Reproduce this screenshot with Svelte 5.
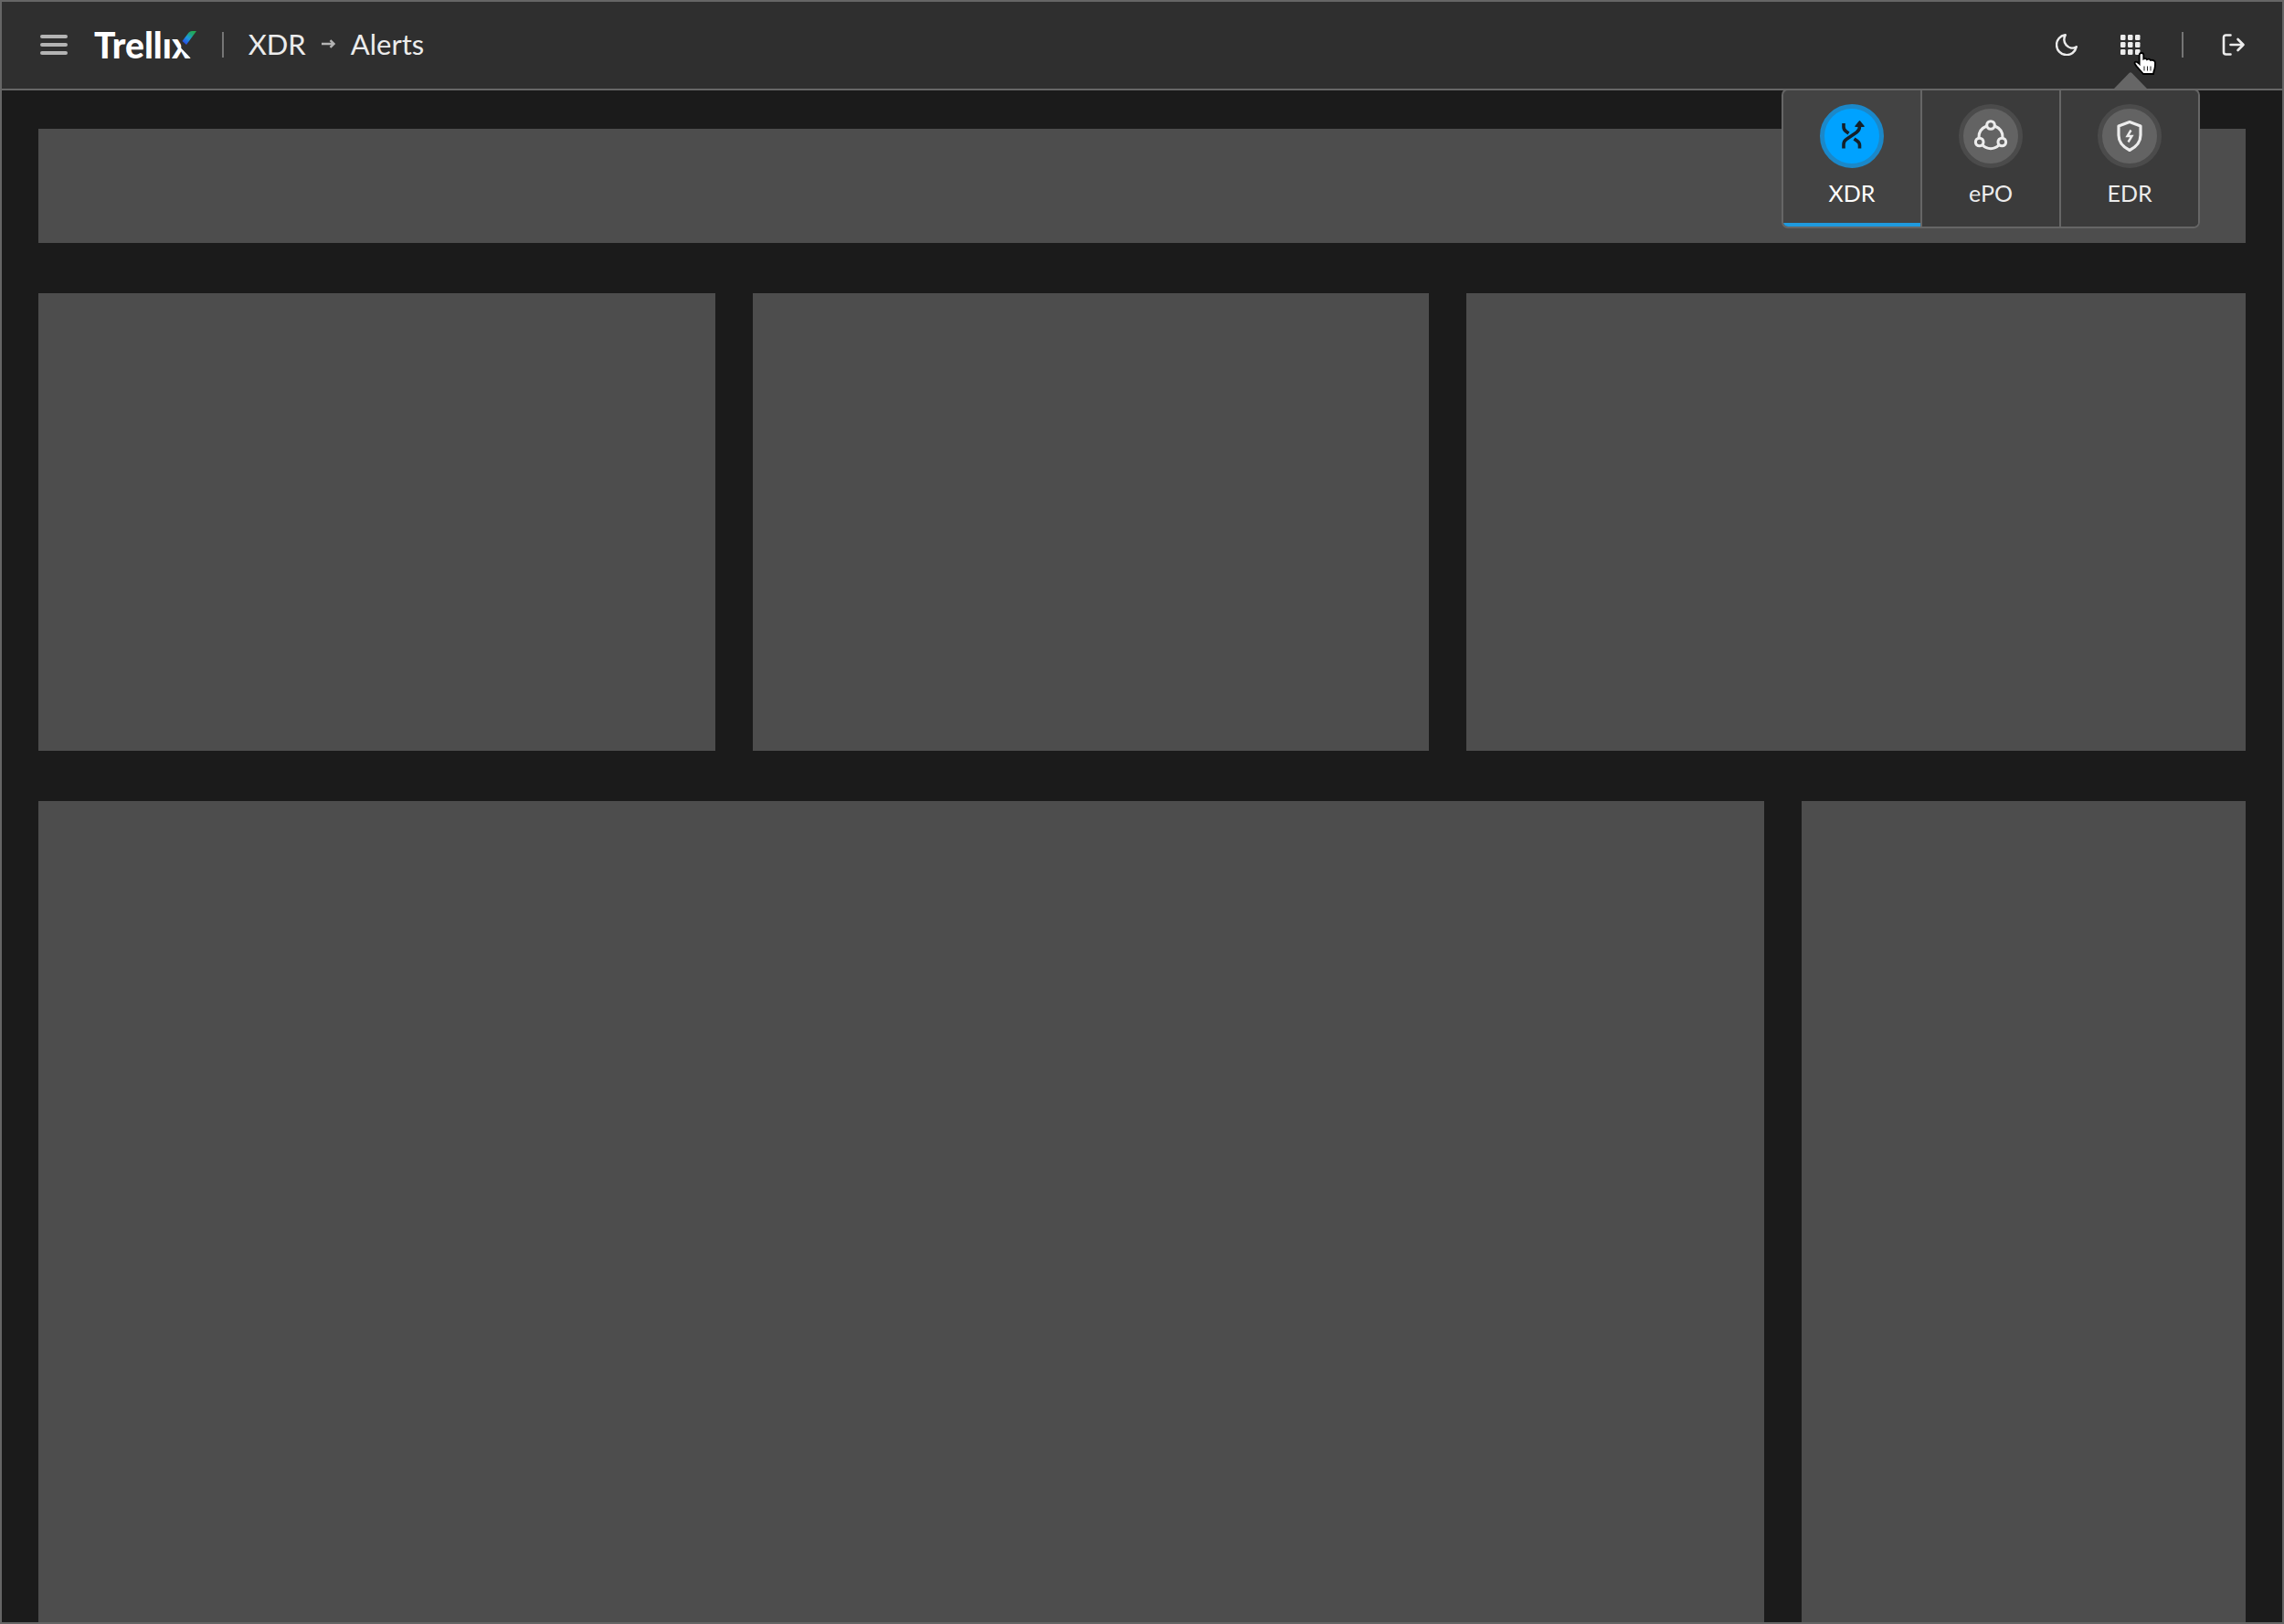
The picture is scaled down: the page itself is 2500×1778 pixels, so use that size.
<script>
  let active = $state('XDR');
  const apps = ['XDR', 'ePO', 'EDR'];
</script>

<div class="frame">
  <header>
    <button class="icon menu-toggle" aria-label="Menu">
      <svg width="30" height="22" viewBox="0 0 30 22">
        <g fill="#b4b4b4">
          <rect width="30" height="4" rx="2" />
          <rect y="9" width="30" height="4" rx="2" />
          <rect y="18" width="30" height="4" rx="2" />
        </g>
      </svg>
    </button>
    <a class="logo" href="#home" aria-label="Trellix">
      <span>Trellı</span><span class="x"><span class="letter">x</span>
        <svg class="arm" width="16" height="15" viewBox="0 0 16 15">
          <defs>
            <linearGradient id="arm" x1="2" y1="14" x2="12" y2="0" gradientUnits="userSpaceOnUse">
              <stop offset="0" stop-color="#2b3fe6" />
              <stop offset="0.45" stop-color="#1d98e0" />
              <stop offset="0.8" stop-color="#1fa574" />
              <stop offset="1" stop-color="#22ab55" />
            </linearGradient>
          </defs>
          <path d="M0.500 11 7.500 1.800Q9 0 11 0H16L5 15Z" fill="url(#arm)" />
        </svg></span>
    </a>
    <span class="rule"></span>
    <nav class="crumbs" aria-label="Breadcrumb">
      <a href="#xdr">XDR</a>
      <svg width="15" height="10" viewBox="0 0 15 10">
        <path d="M0 5H13M9.500 1.200 13.500 5 9.500 8.800" fill="none" stroke="#b4b4b4" stroke-width="2.400" />
      </svg>
      <a href="#alerts">Alerts</a>
    </nav>

    <div class="tools">
      <button class="icon" aria-label="Dark mode">
        <svg width="24" height="24" viewBox="0 0 24 24">
          <path
            d="M10.500 1.200A11 11 0 1 0 22.800 14.300C19 16.500 14.500 15.800 11.800 12.600 9 9.500 8.800 5 10.800 1.200Z"
            fill="none" stroke="#ececec" stroke-width="2.400" stroke-linejoin="round"
          />
        </svg>
      </button>
      <div class="switcher">
        <button class="icon" aria-label="Applications" aria-expanded="true">
          <svg width="22" height="22" viewBox="0 0 22 22" fill="#ececec">
            {#each [0, 8, 16] as y}
              {#each [0, 8, 16] as x}
                <rect {x} {y} width="5.500" height="6" rx="1.300" />
              {/each}
            {/each}
          </svg>
        </button>
        <svg class="caret" width="36" height="18" viewBox="0 0 36 18">
          <path d="M0 18 16.500 1Q18 -0.500 19.500 1L36 18Z" fill="#666" />
        </svg>
        <div class="apps">
          {#each apps as app}
            <button class:active={active === app} onclick={() => (active = app)}>
              <span class="disc">
                {#if app === 'XDR'}
                  <svg width="34" height="34" viewBox="0 0 34 34" fill="none" stroke="#14202a" stroke-width="3.600">
                    <path d="M8 3V7Q8 10 10.500 11.800L13.500 14M8 30.500V26Q8 22.500 11 20.500L22 13Q25.500 10.500 25.500 6V4M19.500 20 23 22.500Q25.500 24.300 25.500 27V30.500" />
                    <path d="M25.500 1 29.800 6.200H21.200Z" fill="#14202a" stroke-width="1.800" stroke-linejoin="round" />
                  </svg>
                {:else if app === 'ePO'}
                  <svg width="40" height="36" viewBox="0 0 40 36" fill="none" stroke="#ececec" stroke-width="3.100">
                    <circle cx="20" cy="6" r="4.300" />
                    <circle cx="7.700" cy="24.500" r="4.300" />
                    <circle cx="32.300" cy="24.500" r="4.300" />
                    <path d="M15.500 7C9.500 9.500 6.500 14 7 20M24.500 7C30.500 9.500 33.500 14 33 20M11 27.800C16 33 24 33 29 27.800" />
                  </svg>
                {:else}
                  <svg width="30" height="36" viewBox="0 0 30 36" fill="none" stroke="#ececec" stroke-width="3.200">
                    <path d="M15 2.500 27 7V17Q27 27.500 15 33.500 3 27.500 3 17V7Z" stroke-linejoin="round" />
                    <path d="M16.500 11.500 12.500 18H17.500L13.500 24.500" stroke-width="2.400" />
                  </svg>
                {/if}
              </span>
              <span>{app}</span>
            </button>
          {/each}
        </div>
        <svg class="cursor" width="27" height="28" viewBox="0 0 27 28">
          <path
            d="M10 2C11.500 2 12.300 3 12.300 4.300V8.500C13.500 7.800 15.500 8 16 9.200 17.500 8.400 19.300 8.800 20 10 22 9.300 25 10.200 25 12.800 25 16.500 24.800 19.500 23.500 22L23 25H12C10 22.500 7 19.500 5 17 3.500 15 1.800 13.500 2.700 12.300 3.800 11 5.800 12 7.700 14V4.300C7.700 3 8.500 2 10 2Z"
            fill="#fff" stroke="#000" stroke-width="1.800"
          />
          <path d="M13 16.500V21.500M16.500 16.500V21.500M20 16.500V21.500" stroke="#222" stroke-width="1" />
        </svg>
      </div>
      <span class="rule"></span>
      <button class="icon logout" aria-label="Log out">
        <svg width="26" height="24" viewBox="0 0 26 24" fill="none" stroke="#ececec" stroke-width="2.600" stroke-linecap="round" stroke-linejoin="round">
          <path d="M9.500 1.500H4.500Q2 1.500 2 4V20Q2 22.500 4.500 22.500H9.500M9.500 12H23.500M17.500 6 23.500 12 17.500 18" />
        </svg>
      </button>
    </div>
  </header>

  <main>
    <section class="panel banner"></section>
    <div class="row three">
      <section class="panel"></section>
      <section class="panel"></section>
      <section class="panel"></section>
    </div>
    <div class="row two">
      <section class="panel"></section>
      <section class="panel"></section>
    </div>
  </main>
</div>

<style>
  :global(body) {
    margin: 0;
    background: #1b1b1b;
  }
  .frame {
    box-sizing: border-box;
    min-height: 100vh;
    display: flex;
    flex-direction: column;
    border: 2px solid #666;
    background: #1b1b1b;
    color: #ececec;
    font-family: Lato, sans-serif;
  }
  header {
    display: flex;
    align-items: center;
    height: 94px;
    padding: 0 40px 1px 42px;
    border-bottom: 2px solid #666;
    background: #2f2f2f;
  }
  svg {
    display: block;
  }
  a {
    color: inherit;
    text-decoration: none;
  }
  button {
    padding: 0;
    border: 0;
    background: none;
    color: inherit;
    font: inherit;
    cursor: pointer;
  }
  .icon {
    display: block;
  }
  .logo {
    display: flex;
    margin-left: 29px;
    color: #fff;
    font-size: 39px;
    font-weight: 900;
    line-height: 48px;
  }
  .x {
    position: relative;
  }
  .letter {
    display: block;
    clip-path: polygon(0 0, 50% 0, 50% 58%, 100% 80%, 100% 100%, 0 100%);
  }
  .arm {
    position: absolute;
    top: 9px;
    left: 11px;
  }
  .rule {
    width: 2px;
    height: 28px;
    background: #757575;
  }
  .logo + .rule {
    margin-left: 34px;
  }
  .crumbs {
    display: flex;
    align-items: center;
    gap: 17px;
    margin-left: 27px;
    padding-bottom: 2px;
    font-size: 31px;
    font-weight: 400;
    line-height: 40px;
  }
  .tools {
    display: flex;
    align-items: center;
    margin-left: auto;
  }
  .switcher {
    position: relative;
    margin: 0 45px 0 47px;
  }
  .logout {
    margin-left: 42px;
  }
  .caret {
    position: absolute;
    top: 41px;
    left: -7px;
  }
  .apps {
    position: absolute;
    z-index: 1;
    top: 59px;
    right: -65px;
    display: grid;
    grid-template-columns: repeat(3, 150px);
    gap: 2px;
    overflow: hidden;
    border: 2px solid #666;
    border-radius: 7px;
    background: #666;
  }
  .apps button {
    display: flex;
    flex-direction: column;
    align-items: center;
    gap: 11px;
    height: 149px;
    padding-top: 15px;
    box-sizing: border-box;
    border-bottom: 4px solid #3b3b3b;
    background: #3b3b3b;
    font-size: 25px;
    line-height: 32px;
  }
  .apps .active {
    border-color: #1f9ade;
    background: #434343;
    color: #fff;
  }
  .disc {
    display: grid;
    place-items: center;
    width: 60px;
    height: 60px;
    border: 5px solid #4b4b4b;
    border-radius: 50%;
    background: #636363;
  }
  .active .disc {
    border-color: #1b88c9;
    background: #00a2ff;
  }
  .cursor {
    position: absolute;
    z-index: 2;
    top: 18px;
    left: 13px;
  }
  main {
    flex: 1;
    display: flex;
    flex-direction: column;
    gap: 55px;
    padding: 42px 40px 0;
  }
  .panel {
    background: #4d4d4d;
  }
  .banner {
    height: 125px;
  }
  .row {
    display: grid;
    gap: 41px;
  }
  .three {
    grid-template-columns: 741fr 741fr 853fr;
    grid-auto-rows: 501px;
  }
  .two {
    flex: 1;
    grid-template-columns: 1890fr 486fr;
  }
</style>
